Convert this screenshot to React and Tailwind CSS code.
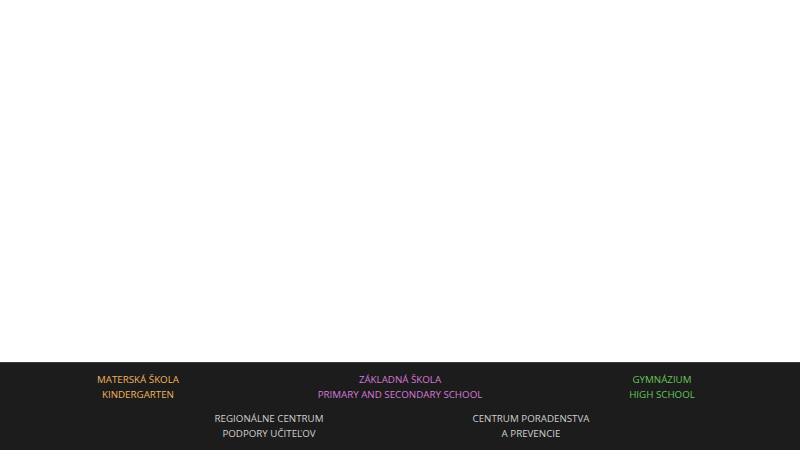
export default function App() {
  const font = { fontFamily: '"Open Sans", "Noto Sans", sans-serif' }
  return (
    <div className="min-h-[450px] flex flex-col bg-white" style={font}>
      <div className="flex-1" />
      <footer className="h-[88px] bg-[#1c1c1c] border-t border-[#3a3a3a] pt-[9px] text-[9.75px] leading-[15px] text-center uppercase">
        <div className="grid grid-cols-3 px-[7px]">
          <a className="text-[#f0b35f]">Materská škola<br />Kindergarten</a>
          <a className="text-[#d47ad8]">Základná škola<br />Primary and secondary school</a>
          <a className="text-[#67c45c]">Gymnázium<br />High school</a>
        </div>
        <div className="grid grid-cols-2 w-[524px] mx-auto mt-[9px] text-[#cfcfcf]">
          <a>Regionálne centrum<br />podpory učiteľov</a>
          <a>Centrum poradenstva<br />a prevencie</a>
        </div>
      </footer>
    </div>
  )
}
